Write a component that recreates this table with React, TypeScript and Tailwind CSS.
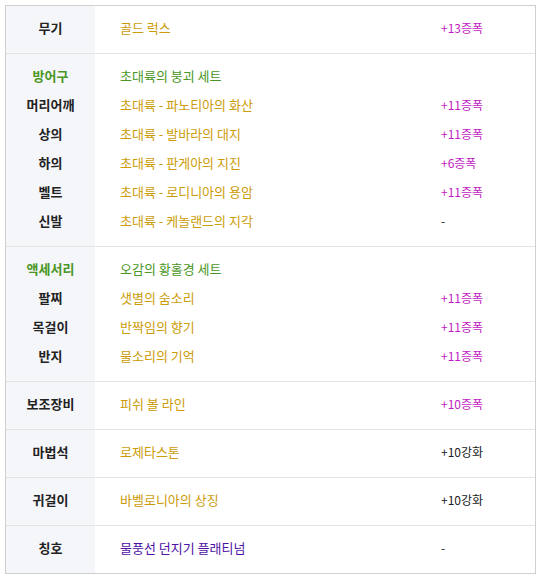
type Line = {
  label: string;
  name: string;
  value: string;
  head?: boolean;
  tone?: "gold" | "green" | "purple";
  valueTone?: "magenta" | "black";
};

const sections: Line[][] = [
  [{ label: "무기", name: "골드 럭스", value: "+13증폭", tone: "gold", valueTone: "magenta" }],
  [
    { label: "방어구", name: "초대륙의 붕괴 세트", value: "", head: true, tone: "green" },
    { label: "머리어깨", name: "초대륙 - 파노티아의 화산", value: "+11증폭", tone: "gold", valueTone: "magenta" },
    { label: "상의", name: "초대륙 - 발바라의 대지", value: "+11증폭", tone: "gold", valueTone: "magenta" },
    { label: "하의", name: "초대륙 - 판게아의 지진", value: "+6증폭", tone: "gold", valueTone: "magenta" },
    { label: "벨트", name: "초대륙 - 로디니아의 용암", value: "+11증폭", tone: "gold", valueTone: "magenta" },
    { label: "신발", name: "초대륙 - 케놀랜드의 지각", value: "-", tone: "gold", valueTone: "black" },
  ],
  [
    { label: "액세서리", name: "오감의 황홀경 세트", value: "", head: true, tone: "green" },
    { label: "팔찌", name: "샛별의 숨소리", value: "+11증폭", tone: "gold", valueTone: "magenta" },
    { label: "목걸이", name: "반짝임의 향기", value: "+11증폭", tone: "gold", valueTone: "magenta" },
    { label: "반지", name: "물소리의 기억", value: "+11증폭", tone: "gold", valueTone: "magenta" },
  ],
  [{ label: "보조장비", name: "피쉬 볼 라인", value: "+10증폭", tone: "gold", valueTone: "magenta" }],
  [{ label: "마법석", name: "로제타스톤", value: "+10강화", tone: "gold", valueTone: "black" }],
  [{ label: "귀걸이", name: "바벨로니아의 상징", value: "+10강화", tone: "gold", valueTone: "black" }],
  [{ label: "칭호", name: "물풍선 던지기 플래티넘", value: "-", tone: "purple", valueTone: "black" }],
];

const nameColor = {
  gold: "text-[#cc9c08]",
  green: "text-[#4a9626]",
  purple: "text-[#4e12a6]",
};

const valueColor = {
  magenta: "text-[#c21cc2]",
  black: "text-[#222]",
};

export default function App() {
  return (
    <div className="min-h-[581px] bg-white pl-[5px] pt-[5px] font-['Noto_Sans_CJK_KR',sans-serif] text-[12px]">
      <div className="w-[531px] border border-[#cfcfcf]">
        {sections.map((lines, i) => (
          <div key={i} className={`flex ${i > 0 ? "border-t border-[#e3e3e3]" : ""}`}>
            {/* label column */}
            <div className="w-[89px] shrink-0 bg-[#f5f6fa] pt-[7px] pb-[11px]">
              {lines.map((l) => (
                <div
                  key={l.label}
                  className={`flex h-[29px] items-center justify-center text-[13px] font-bold ${
                    l.head ? "text-[#4a9626]" : "text-[#222]"
                  }`}
                >
                  {l.label}
                </div>
              ))}
            </div>
            {/* item + upgrade */}
            <div className="flex-1 pt-[7px] pb-[11px]">
              {lines.map((l) => (
                <div key={l.label} className="flex h-[29px] items-center">
                  <span className={`flex-1 pl-[25px] text-[13px] ${nameColor[l.tone ?? "gold"]}`}>{l.name}</span>
                  <span className={`w-[94px] ${valueColor[l.valueTone ?? "black"]}`}>{l.value}</span>
                </div>
              ))}
            </div>
          </div>
        ))}
      </div>
    </div>
  );
}
